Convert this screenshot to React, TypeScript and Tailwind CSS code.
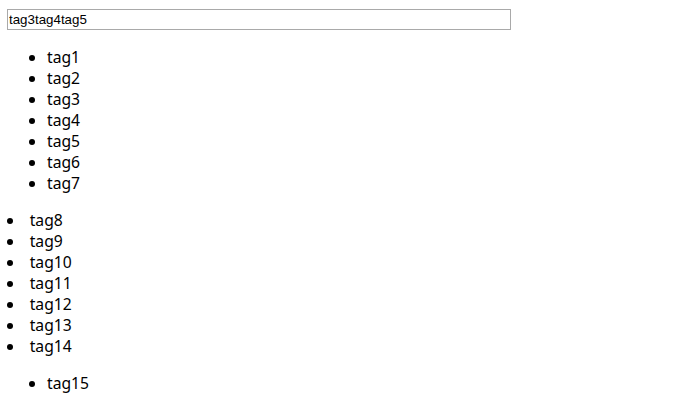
import React from "react";

const first = ["tag1", "tag2", "tag3", "tag4", "tag5", "tag6", "tag7"];
const second = ["tag8", "tag9", "tag10", "tag11", "tag12", "tag13", "tag14"];
const third = ["tag15"];

export default function App() {
  return (
    <div className="bg-white min-h-[415px] pt-[9px] px-[7px] text-black" style={{ fontFamily: '"Noto Sans", sans-serif' }}>
      <input
        type="text"
        defaultValue="tag3tag4tag5"
        className="block w-[504px] h-[21px] border border-[#a9a9a9] px-[1px] text-[13.33px] text-black outline-none"
        style={{ fontFamily: '"Liberation Sans", Arial, sans-serif' }}
      />
      <ul className="list-disc pl-[40px] mt-[17px] text-[15.7px] leading-[21px]">
        {first.map((t) => (
          <li key={t}>{t}</li>
        ))}
      </ul>
      <ul className="list-disc list-inside pl-0 mt-[16px] text-[15.7px] leading-[21px]">
        {second.map((t) => (
          <li key={t}>{t}</li>
        ))}
      </ul>
      <ul className="list-disc pl-[40px] mt-[16px] text-[15.7px] leading-[21px]">
        {third.map((t) => (
          <li key={t}>{t}</li>
        ))}
      </ul>
    </div>
  );
}
